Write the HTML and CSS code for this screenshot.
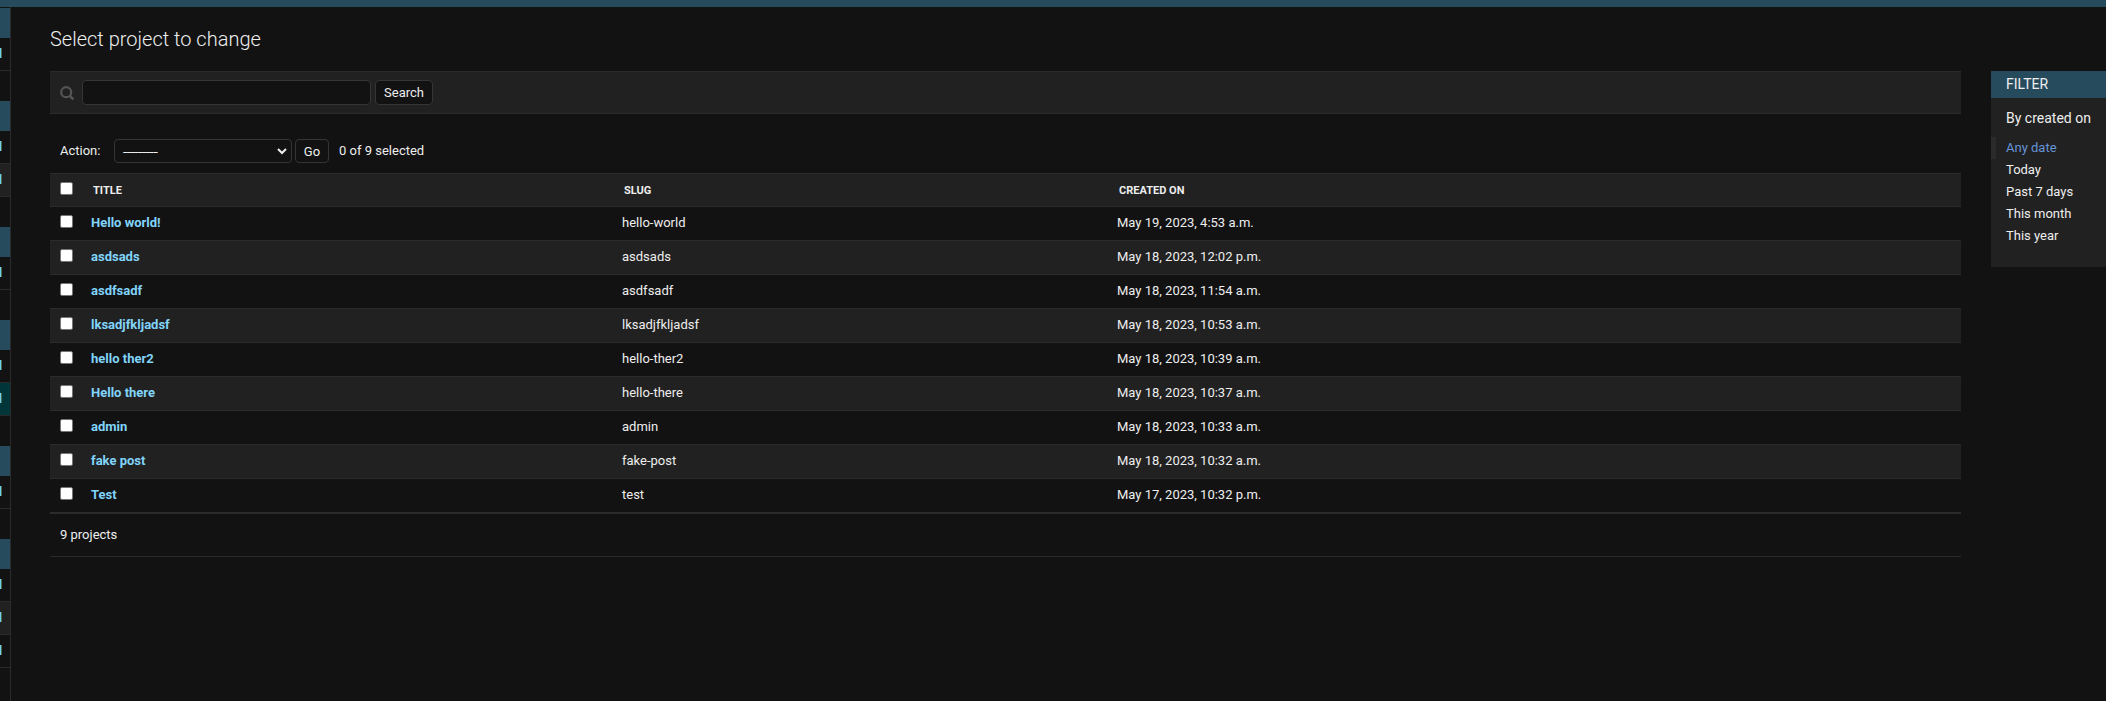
FILE: index.html
```html
<!DOCTYPE html>
<html lang="en">
<head>
<meta charset="utf-8">
<title>Select project to change</title>
<link rel="stylesheet" href="styles.css">
</head>
<body>
<div class="topbar"></div>
<div class="main">
  <nav class="sidebar">
    <div class="module"><div class="caption"></div><div class="row"><i class="edge"></i></div></div>
    <div class="module"><div class="caption"></div><div class="row"><i class="edge"></i></div><div class="row alt"><i class="edge"></i></div></div>
    <div class="module"><div class="caption"></div><div class="row"><i class="edge"></i></div></div>
    <div class="module"><div class="caption"></div><div class="row"><i class="edge"></i></div><div class="row current"><i class="edge"></i></div></div>
    <div class="module"><div class="caption"></div><div class="row"><i class="edge"></i></div></div>
    <div class="module"><div class="caption"></div><div class="row"><i class="edge"></i></div><div class="row alt"><i class="edge"></i></div><div class="row"><i class="edge"></i></div></div>
  </nav>
  <main class="content">
    <h1>Select project to change</h1>
    <div class="columns">
      <section class="changelist">
        <form class="search">
          <svg class="search-icon" width="15" height="15" viewBox="0 0 15 15" fill="none" stroke="#555"><circle cx="6.2" cy="6.2" r="5" stroke-width="2.2"/><path d="M9.8 9.8L13.4 13.4" stroke-width="2.6"/></svg>
          <input class="search-input" type="text">
          <button class="button" type="button">Search</button>
        </form>
        <div class="actions">
          <span class="label">Action:</span>
          <div class="select"><span class="dashes">---------</span><svg width="10" height="7" viewBox="0 0 10 7" fill="none" stroke="#eee" stroke-width="2"><path d="M1 1L5 5L9 1"/></svg></div>
          <button class="button go" type="button">Go</button>
          <span class="counter">0 of 9 selected</span>
        </div>
        <table>
          <thead><tr><th class="check"><i class="box"></i></th><th class="c-title">Title</th><th class="c-slug">Slug</th><th>Created on</th></tr></thead>
          <tbody>
            <tr><td><i class="box"></i></td><td><a>Hello world!</a></td><td>hello-world</td><td>May 19, 2023, 4:53 a.m.</td></tr>
            <tr><td><i class="box"></i></td><td><a>asdsads</a></td><td>asdsads</td><td>May 18, 2023, 12:02 p.m.</td></tr>
            <tr><td><i class="box"></i></td><td><a>asdfsadf</a></td><td>asdfsadf</td><td>May 18, 2023, 11:54 a.m.</td></tr>
            <tr><td><i class="box"></i></td><td><a>lksadjfkljadsf</a></td><td>lksadjfkljadsf</td><td>May 18, 2023, 10:53 a.m.</td></tr>
            <tr><td><i class="box"></i></td><td><a>hello ther2</a></td><td>hello-ther2</td><td>May 18, 2023, 10:39 a.m.</td></tr>
            <tr><td><i class="box"></i></td><td><a>Hello there</a></td><td>hello-there</td><td>May 18, 2023, 10:37 a.m.</td></tr>
            <tr><td><i class="box"></i></td><td><a>admin</a></td><td>admin</td><td>May 18, 2023, 10:33 a.m.</td></tr>
            <tr><td><i class="box"></i></td><td><a>fake post</a></td><td>fake-post</td><td>May 18, 2023, 10:32 a.m.</td></tr>
            <tr><td><i class="box"></i></td><td><a>Test</a></td><td>test</td><td>May 17, 2023, 10:32 p.m.</td></tr>
          </tbody>
        </table>
        <p class="paginator">9 projects</p>
      </section>
      <aside class="filter">
        <h2>Filter</h2>
        <h3>By created on</h3>
        <ul>
          <li class="selected">Any date</li>
          <li>Today</li>
          <li>Past 7 days</li>
          <li>This month</li>
          <li>This year</li>
        </ul>
      </aside>
    </div>
  </main>
</div>
</body>
</html>
```
FILE: styles.css
```css
* { box-sizing: border-box; }
body {
  margin: 0;
  height: 701px;
  overflow: hidden;
  background: #121212;
  color: #eee;
  font: 13px/17px Roboto, sans-serif;
}
.topbar { height: 7px; background: #264b5d; }
.main { display: flex; height: 694px; }

.sidebar {
  width: 11px;
  flex: none;
  padding-top: 1px;
  border-right: 1px solid #2b2b2b;
  overflow: hidden;
}
.module { margin-bottom: 30px; }
.caption { height: 30px; background: #264b5d; }
.row {
  height: 33px;
  padding-top: 10px;
  border-bottom: 1px solid #2b2b2b;
}
.edge {
  display: block;
  width: 2px;
  height: 10px;
  background: linear-gradient(90deg, #6fd0f2 50%, #4c6a45 50%);
}
.alt { background: #212121; }
.current { background: #00363a; }

.content { flex: 1; min-width: 0; padding: 19px 0 0 39px; }
h1 { margin: 0 0 19px; font-size: 20px; font-weight: 300; line-height: 26px; }
.columns { display: flex; gap: 30px; align-items: flex-start; }
.changelist { width: 1911px; flex: none; }

.search {
  display: flex;
  height: 43px;
  padding: 8px 10px 0;
  background: #212121;
  border: solid #2b2b2b;
  border-width: 1px 0;
}
.search-icon { margin: 6px 7px 0 0; }
.search-input {
  width: 289px;
  height: 25px;
  margin-right: 4px;
  background: #121212;
  border: 1px solid #353535;
  border-radius: 4px;
}
.button {
  width: 58px;
  height: 25px;
  padding: 0;
  background: #121212;
  border: 1px solid #353535;
  border-radius: 4px;
  color: #eee;
  font: 13px/17px Roboto, sans-serif;
}
.actions { display: flex; height: 59px; padding: 25px 10px 0; }
.label { width: 54px; padding-top: 3px; }
.select {
  display: flex;
  align-items: center;
  justify-content: space-between;
  width: 178px;
  height: 24px;
  padding: 0 4px 0 8px;
  border: 1px solid #353535;
  border-radius: 4px;
}
.dashes { letter-spacing: 0.2px; text-shadow: 0.8px 0 #eee; }
.go { width: 34px; height: 24px; margin: 0 10px 0 3px; padding-top: 1px; }
.counter { padding-top: 3px; }

table { width: 100%; border-collapse: separate; border-spacing: 0; table-layout: fixed; }
th {
  height: 34px;
  padding: 1px 10px 0;
  border: solid #2b2b2b;
  border-width: 1px 0;
  background: #212121;
  font-size: 11px;
  line-height: 16px;
  text-align: left;
  text-transform: uppercase;
}
.check { width: 33px; }
.c-title { width: 531px; }
.c-slug { width: 495px; }
td {
  height: 34px;
  padding: 8px 8px 0;
  vertical-align: top;
  line-height: 16px;
  border-bottom: 1px solid #2b2b2b;
}
tbody tr:nth-child(even) { background: #212121; }
td:first-child { padding-left: 10px; }
td a { color: #81d4fa; font-weight: 700; }
.box {
  display: block;
  width: 13px;
  height: 13px;
  background: #fff;
  border: 1px solid #767676;
  border-radius: 2px;
}
th .box { margin-top: -5px; }
.paginator {
  height: 44px;
  margin: 0;
  padding: 12px 10px 0;
  border: solid #2b2b2b;
  border-width: 1px 0;
}

.filter { flex: 1; height: 196px; background: #212121; }
h2 {
  height: 27px;
  margin: 0;
  padding-left: 15px;
  background: #264b5d;
  font-size: 14px;
  font-weight: 400;
  line-height: 27px;
  text-transform: uppercase;
}
h3 { margin: 12px 0 10px; padding-left: 15px; font-size: 14px; font-weight: 400; line-height: 17px; }
ul { margin: 0; padding: 0; list-style: none; }
li { height: 22px; padding-left: 15px; line-height: 22px; }
.selected { padding-left: 10px; border-left: 5px solid #2b2b2b; color: #6694d8; }
```
